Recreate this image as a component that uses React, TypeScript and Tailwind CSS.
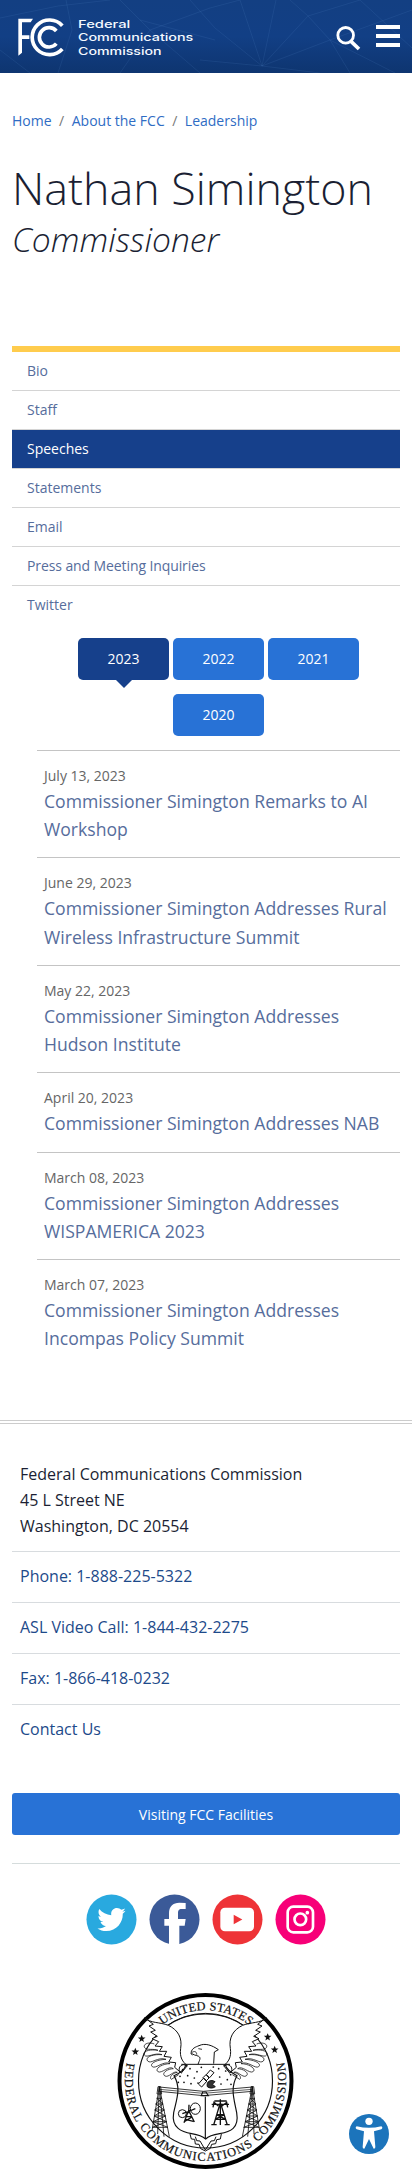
import type { ReactNode } from 'react';
import { FaTwitter } from 'react-icons/fa';

const menu = ['Bio', 'Staff', 'Speeches', 'Statements', 'Email', 'Press and Meeting Inquiries', 'Twitter'];

const speeches = [
  { date: 'July 13, 2023', lines: ['Commissioner Simington Remarks to AI', 'Workshop'] },
  { date: 'June 29, 2023', lines: ['Commissioner Simington Addresses Rural', 'Wireless Infrastructure Summit'] },
  { date: 'May 22, 2023', lines: ['Commissioner Simington Addresses', 'Hudson Institute'] },
  { date: 'April 20, 2023', lines: ['Commissioner Simington Addresses NAB'] },
  { date: 'March 08, 2023', lines: ['Commissioner Simington Addresses', 'WISPAMERICA 2023'] },
  { date: 'March 07, 2023', lines: ['Commissioner Simington Addresses', 'Incompas Policy Summit'] },
];

const contacts = ['Phone: 1-888-225-5322', 'ASL Video Call: 1-844-432-2275', 'Fax: 1-866-418-0232', 'Contact Us'];

function HeaderPattern() {
  return (
    <svg className="absolute inset-0" width="412" height="73" viewBox="0 0 412 73" fill="none" stroke="#5b8fd0" strokeOpacity="0.14" strokeWidth="1">
      <path d="M0 18 58 6 110 0M66 0 72 30 58 73M120 0 150 30 210 8 240 0M150 30 120 73M150 30 200 73M215 40 140 20M262 66 308 16 360 0M262 66 215 28M262 66 240 0M262 66 276 0M262 66 330 40 412 10M262 66 200 60M262 66 320 73M308 16 290 0M308 16 330 40 350 73M330 40 395 73M360 0 412 48M0 50 30 73M215 28 190 0" />
    </svg>
  );
}

function Logo() {
  return (
    <svg width="180" height="41" viewBox="50 50 540 123" fill="none" stroke="#fff" role="img">
      <path d="M54 55H98L91 66H65V105H87V116H65V157L54 166Z" fill="#fff" stroke="none" />
      <path d="M186 76A52 52 0 1 0 186 146" strokeWidth="11" />
      <path d="M168 92A29 29 0 1 0 168 130" strokeWidth="11" />
      <g fill="#f4f9ff" stroke="none" fontFamily="Inter, sans-serif" fontSize="31" fontWeight="500">
        <text x="233" y="82" textLength="157" lengthAdjust="spacingAndGlyphs">Federal</text>
        <text x="233" y="123" textLength="346" lengthAdjust="spacingAndGlyphs">Communications</text>
        <text x="233" y="164" textLength="251" lengthAdjust="spacingAndGlyphs">Commission</text>
      </g>
    </svg>
  );
}

function Disc({ color, children }: { color: string; children?: ReactNode }) {
  return (
    <svg width="51" height="51" viewBox="0 0 153 153">
      <circle cx="76.5" cy="76.5" r="75" fill={color} />
      {children}
    </svg>
  );
}

function Star({ x, y }: { x: number; y: number }) {
  return <path transform={`translate(${x} ${y}) scale(1.15)`} d="M0-10 3-3 10-3 4 2 6 9 0 5-6 9-4 2-10-3-3-3Z" fill="#111" stroke="none" />;
}

function Tower({ x }: { x: number }) {
  return (
    <g transform={`translate(${x} 0)`} strokeWidth="2.5">
      <path d="M0 350-22 482M0 350 30 500M0 350-5 492M0 350 14 500M-8 385H7M-11 402H11M-14 420H15M-16 438H19M-19 455H22M-21 472H26M-8 385 11 402-14 420 19 438-19 455 26 472M7 385-11 402 15 420-16 438 22 455-21 472M-4 350-7 372H7L4 350Z" />
    </g>
  );
}

function Wing() {
  return (
    <g strokeWidth="3">
      <path d="M134 143C150 160 180 156 205 166 235 180 247 205 242 235 238 262 248 276 262 287L244 309 224 292 227 278 206 276 214 262 192 259 200 244 178 244 187 230 165 228 176 215 156 206 172 199 152 186 166 181 147 168 160 163Z" fill="#fff" />
      <path d="M163 222C143 214 128 224 134 233S160 235 174 241C148 237 126 244 133 255S164 246 186 254C156 252 134 262 143 273S174 259 198 268C168 269 147 282 157 290S190 271 210 281C184 281 163 298 174 305S207 285 220 296C198 297 184 312 195 318S221 301 232 307C218 309 206 322 214 328L236 314" strokeWidth="2.3" />
      <path d="M244 309C232 300 238 286 250 284L262 287" />
    </g>
  );
}

function Seal() {
  const dots = [[248, 299], [270, 296], [291, 305], [240, 319], [263, 317], [283, 324], [252, 337], [273, 341], [294, 339], [356, 296], [377, 303], [392, 314], [359, 321], [382, 329], [363, 342], [393, 343], [235, 337], [304, 292], [340, 291]];
  return (
    <svg width="177" height="176" viewBox="51 69 531 528" fill="none" stroke="#111" strokeWidth="3">
      <circle cx="316.500" cy="333" r="258" fill="#fff" strokeWidth="12" stroke="#000" />
      <circle cx="316.500" cy="333" r="201" strokeWidth="3.500" />
      <path id="seal-top" d="M104 333A212.500 212.500 0 0 1 529 333" stroke="none" />
      <path id="seal-bottom" d="M81 275A242 242 0 1 0 552 275" stroke="none" />
      <path d="M160 165 205 165 428 165 473 165 450 195 180 195Z" fill="#fff" stroke="none" />
      <path d="M195 171A201 201 0 0 1 438 171" />
      <Wing />
      <g transform="translate(633 0) scale(-1 1)"><Wing /></g>
      <g fill="#111" stroke="#111" strokeWidth="0.600" fontFamily="'Liberation Serif', serif" fontSize="37">
        <text><textPath href="#seal-top" startOffset="194" textLength="282">UNITED STATES</textPath></text>
        <text><textPath href="#seal-bottom" startOffset="3" textLength="868">FEDERAL COMMUNICATIONS COMMISSION</textPath></text>
      </g>
      <Star x={125} y={206} />
      <Star x={106} y={245} />
      <Star x={503} y={201} />
      <Star x={524} y={239} />
      <path d="M294 283C298 271 304 264 296 259 288 255 280 256 273 248 276 234 287 231 297 227 315 218 337 226 355 239L343 246 341 281" />
      <path d="M275 248C284 241 291 246 290 254M295 236 306 238M272 249 277 256" strokeWidth="2.500" />
      <path d="M244 283H390" />
      <path d="M178 351 310 364 457 351V364L310 377 178 364Z" fill="#fff" strokeWidth="2.500" />
      <path d="M178 358 310 370 457 358" strokeWidth="2" />
      <Tower x={178} />
      <g transform="translate(635 0) scale(-1 1)"><Tower x={178} /></g>
      <path d="M258 284C255 296 249 306 222 317 244 355 230 386 221 428 213 475 247 486 275 491 294 494 307 498 317 507 326 498 340 494 359 491 391 486 418 475 410 428 402 386 390 355 411 317 389 306 378 296 376 284" strokeWidth="3.500" />
      <path d="M316 380V506M308 366 304 377H325L318 366Z" strokeWidth="3.500" />
      <g fill="#111" stroke="none">
        {dots.map(([x, y]) => <circle key={`${x}-${y}`} cx={x} cy={y} r="2.600" />)}
      </g>
      <path d="M331 300 342 308 329 323 319 314ZM311 324 321 333 305 351 295 342ZM318 314 327 324 318 333 309 323Z" fill="#fff" strokeWidth="3" />
      <path d="M322 350C318 334 333 327 345 335L337 343 346 350C338 356 328 355 322 350Z" fill="#333" />
      <circle cx="247" cy="431" r="12" />
      <ellipse cx="286" cy="416" rx="15" ry="17" />
      <path d="M247 431 262 426 286 416M264 425 252 458M268 425 283 456M258 440H275M256 448 280 454M276 441 254 454M267 404 266 430" strokeWidth="4" />
      <path d="M361 388V465M361 398 341 465M361 398 382 465M335 403H387M343 393H380M349 434H373M345 448H377M339 412 342 397 355 408M383 412 380 397 366 408M345 448 373 434M377 448 349 434M334 464H350M374 464H389" strokeWidth="4" />
      <path d="M270 492 274 507 284 508 286 522 297 523 302 536 316 543 331 535 335 523 347 521 350 509 361 507 364 492M286 500 290 512 300 513M348 500 343 512 333 513M300 513 316 540 333 513" strokeWidth="3" />
    </svg>
  );
}

export default function App() {
  return (
    <div className="relative h-[2169px] w-[412px] overflow-hidden bg-white font-['Open_Sans',sans-serif] text-[#1b1f33]">
      <header className="relative flex h-[73px] items-start justify-between bg-linear-to-b from-[#133f82] via-[#123f85] to-[#0e3570] pr-3 pl-[17px]">
        <HeaderPattern />
        <div className="relative mt-[17px]"><Logo /></div>
        <div className="relative mt-6 flex gap-[15px]">
          <svg className="mt-[1px]" width="25" height="26" viewBox="0 0 75 78" fill="none" stroke="#fff">
            <circle cx="29" cy="31" r="23.500" strokeWidth="8.500" />
            <path d="M45 49 69 72" strokeWidth="11" />
          </svg>
          <div className="flex flex-col gap-[5px] pt-px">
            <span className="h-1 w-6 bg-white" />
            <span className="h-1 w-6 bg-white" />
            <span className="h-1 w-6 bg-white" />
          </div>
        </div>
      </header>

      <nav className="mt-9 flex h-6 items-center px-3 text-sm text-[#2f6cc4]">
        <a>Home</a>
        <span className="px-[7.500px] text-[#777]">/</span>
        <a>About the FCC</a>
        <span className="px-[7.500px] text-[#777]">/</span>
        <a>Leadership</a>
      </nav>

      <h1 className="mt-[27px] px-3 font-light">
        <span className="block text-[44.8px] leading-[56px]">Nathan Simington</span>
        <span className="block text-[33.6px] leading-[46px] italic">Commissioner</span>
      </h1>

      <ul className="mx-3 mt-[84px] border-t-[6px] border-[#ffcc4d] text-sm leading-[38px] text-[#566d9c]">
        {menu.map((m) => (
          <li
            key={m}
            className={
              m === 'Speeches'
                ? 'h-[39px] border-b border-[#d4d4d4] bg-[#16408b] px-[15px] text-white'
                : m === 'Twitter'
                  ? 'h-[39px] px-[15px]'
                  : 'h-[39px] border-b border-[#d4d4d4] px-[15px]'
            }
          >
            {m === 'Press and Meeting Inquiries' ? <span className="tracking-[-0.1px]">{m}</span> : m}
          </li>
        ))}
      </ul>

      <section className="mr-3 ml-9 pt-[13px]">
        <div className="flex flex-wrap justify-center gap-x-1 gap-y-[14px] pb-[14px] text-sm text-white">
          {['2023', '2022', '2021', '2020'].map((y, i) => (
            <div
              key={y}
              className={
                i === 0
                  ? 'relative flex h-[42px] w-[91px] items-center justify-center rounded-[5px] bg-[#16408b] pl-px'
                  : 'flex h-[42px] w-[91px] items-center justify-center rounded-[5px] bg-[#2872d6] pl-px'
              }
            >
              {y}
              {i === 0 && (
                <svg className="absolute top-[42px] left-[38px]" width="16" height="8"><path d="M0 0H16L8 8Z" fill="#16408b" /></svg>
              )}
            </div>
          ))}
        </div>
        {speeches.map((s) => (
          <article key={s.date} className="ml-px border-t border-[#c4c4c4] pt-[13px] pb-[14.11px] pl-[7px]">
            <div className="text-sm leading-[23px] text-[#666]">{s.date}</div>
            <div className="text-[17.6px] leading-[28.16px] whitespace-nowrap text-[#566d9c]">
              {s.lines.map((l) => <div key={l}>{l}</div>)}
            </div>
          </article>
        ))}
      </section>

      <footer className="mt-[53.500px] border-t-4 border-double border-[#ccc] px-3">
        <address className="h-[128px] border-b border-[#d8dcdf] px-2 pt-[37px] text-base leading-[26px] not-italic">
          Federal Communications Commission<br />
          45 L Street NE<br />
          Washington, DC 20554
        </address>
        <ul className="text-base leading-[48px] text-[#1d4a8a]">
          {contacts.map((c) => (
            <li key={c} className={c === 'Contact Us' ? 'h-[51px] px-2' : 'h-[51px] border-b border-[#d8dcdf] px-2'}>{c}</li>
          ))}
        </ul>
        <div className="mt-[37px] flex h-[42px] items-center justify-center rounded-[3px] bg-[#2872d6] pt-0.5 text-sm text-white">Visiting FCC Facilities</div>
        <div className="mt-7 flex justify-center gap-3 border-t border-[#d5dcdc] pt-[30px]">
          <Disc color="#29a9df">
            <FaTwitter x="34" y="34" size="85" color="#fff" />
          </Disc>
          <Disc color="#3b5a98">
            <path d="M60 153V95H46V75H60V58C60 37 72 26 91 26L110 27V45H98C89 45 87 50 87 58V75H110L107 95H91V153Z" fill="#fff" />
          </Disc>
          <Disc color="#ee3337">
            <rect x="25" y="41" width="101" height="71" rx="14" fill="#fff" />
            <path d="M65 62V91L91 76.500Z" fill="#ee3337" />
          </Disc>
          <Disc color="#f70078">
            <g fill="none" stroke="#fff">
              <rect x="38" y="38" width="76" height="77" rx="17" strokeWidth="8" />
              <circle cx="76" cy="76" r="17.500" strokeWidth="8" />
            </g>
            <circle cx="97" cy="56" r="5.500" fill="#fff" />
          </Disc>
        </div>
        <div className="mt-[48px] flex justify-center pr-[2px]"><Seal /></div>
      </footer>

      <svg className="absolute top-[2114px] left-[349px]" width="40" height="40" viewBox="0 0 120 120">
        <circle cx="60" cy="60" r="60" fill="#1c74bb" />
        <g fill="#fff">
          <circle cx="60" cy="22" r="11" />
          <path d="M23 37C48 43 72 43 97 37Q103 42 97 46L75 52 79 98Q80 104 74 104L60 75 46 104Q40 104 41 98L45 52 23 46Q17 42 23 37Z" />
        </g>
      </svg>
    </div>
  );
}
